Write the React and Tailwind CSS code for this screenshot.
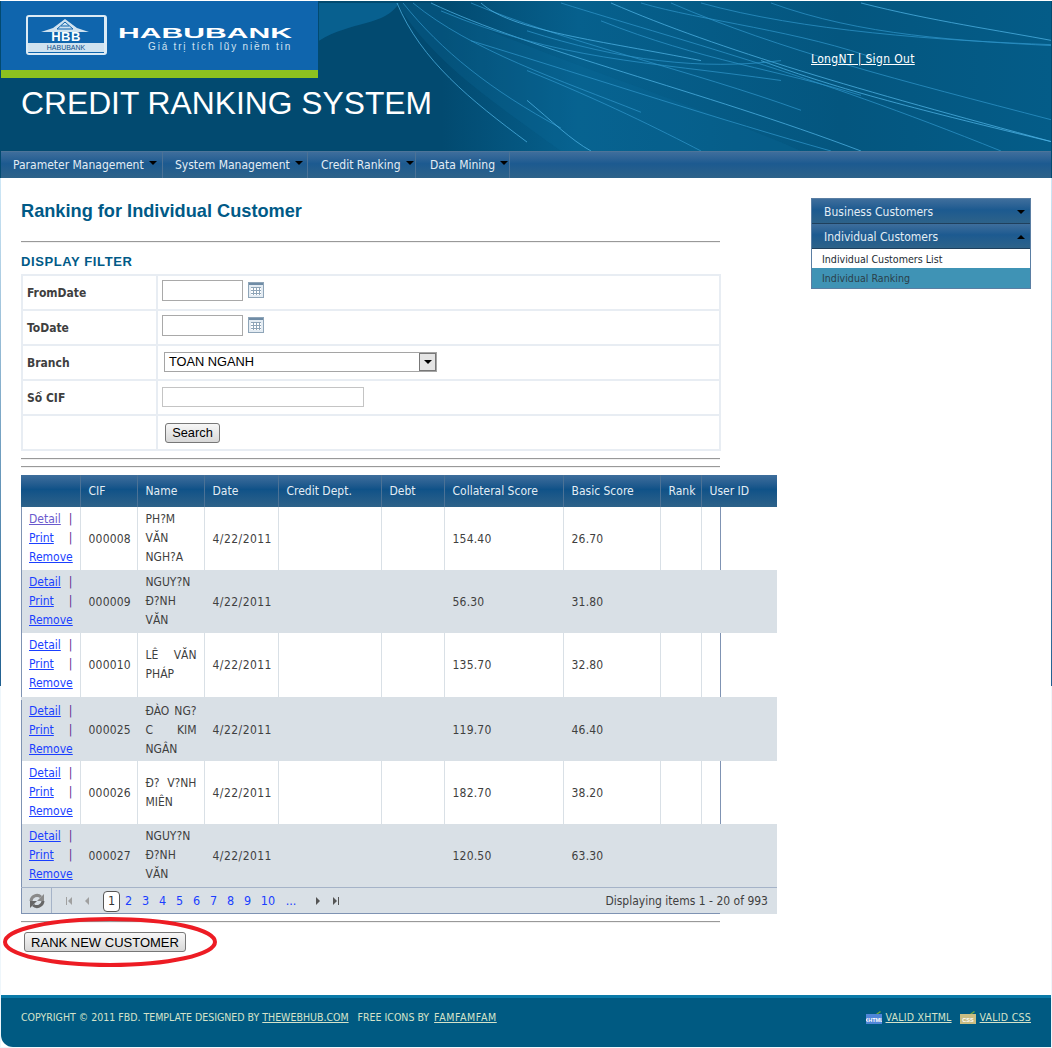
import React from "react"

const navItems = [
  ["Parameter Management", "w-[162px] pl-[12px]"],
  ["System Management", "w-[145px] pl-[12px]"],
  ["Credit Ranking", "w-[108px] pl-[13px]"],
  ["Data Mining", "w-[94px] pl-[14px]"],
]

const rows = [
  { cif: "000008", name: "PH?M VĂN NGH?A", coll: "154.40", basic: "26.70", h: "h-[63px]", visited: true },
  { cif: "000009", name: "NGUY?N Đ?NH VĂN", coll: "56.30", basic: "31.80", h: "h-[63px]", alt: true },
  { cif: "000010", name: "LÊ VĂN PHÁP", coll: "135.70", basic: "32.80", h: "h-[65px] border-b-[3px] border-double border-[#d9e0e6]" },
  { cif: "000025", name: "ĐÀO NG? C KIM NGÂN", coll: "119.70", basic: "46.40", h: "h-[63px]", alt: true },
  { cif: "000026", name: "Đ? V?NH MIÊN", coll: "182.70", basic: "38.20", h: "h-[63px]" },
  { cif: "000027", name: "NGUY?N Đ?NH VĂN", coll: "120.50", basic: "63.30", h: "h-[63px]", alt: true },
]

const headers = ["", "CIF", "Name", "Date", "Credit Dept.", "Debt", "Collateral Score", "Basic Score", "Rank"]
const colWidths = ["w-[59px]", "w-[57px]", "w-[67px]", "w-[74px]", "w-[103px]", "w-[63px]", "w-[119px]", "w-[97px]", "w-[41px]", "w-[19px]", "w-[57px]"]

const pages = [
  ["2", "w-[17px]"], ["3", "w-[17px]"], ["4", "w-[17px]"], ["5", "w-[17px]"], ["6", "w-[17px]"],
  ["7", "w-[17px]"], ["8", "w-[17px]"], ["9", "w-[17px]"], ["10", "w-[24px]"], ["...", "w-[22px]"],
]

function Hr({ className }) {
  return <div className={"h-[2px] w-[699px] border-t border-[#999] bg-[#f1f1f1] " + className} />
}

function Streaks() {
  const lines = [
    "M396 2 C 420 60 470 100 526 142",
    "M402 2 C 440 50 490 90 560 128",
    "M412 2 C 470 50 560 80 640 112",
    "M430 2 C 530 50 700 90 860 151",
    "M470 2 C 560 40 690 70 800 110",
    "M560 2 C 680 40 800 70 1000 151",
    "M610 2 C 720 50 860 90 1052 142",
    "M670 2 C 780 50 900 80 1052 120",
    "M770 2 C 860 35 960 40 1052 45",
    "M860 2 C 930 20 1000 30 1052 40",
    "M470 40 C 600 80 720 120 830 151",
    "M526 70 C 600 100 660 130 700 151",
    "M526 100 C 550 120 570 140 590 151",
    "M600 20 C 700 60 780 70 860 95",
    "M440 10 C 560 60 640 60 780 80",
    "M760 60 C 840 90 920 110 1052 142",
    "M526 30 C 620 60 700 70 780 60",
    "M700 2 C 800 30 940 40 1052 44",
    "M480 2 C 510 30 600 40 700 60",
    "M640 2 C 700 20 800 30 880 60",
  ]
  return (
    <svg className="absolute inset-0 h-full w-full" viewBox="0 0 1050 151" preserveAspectRatio="none">
      <defs>
        <linearGradient id="hdr" x1="0" y1="0" x2="1" y2="0">
          <stop offset="0" stopColor="#024a70" />
          <stop offset="0.42" stopColor="#024a70" />
          <stop offset="0.55" stopColor="#06608d" />
          <stop offset="0.8" stopColor="#04567f" />
          <stop offset="1" stopColor="#045c88" />
        </linearGradient>
      </defs>
      <rect width="1050" height="151" fill="url(#hdr)" />
      <path d="M318 40 C 350 20 385 25 398 2 L 318 2 Z" fill="#0b6a9c" opacity="0.7" />
      <path d="M396 2 C 430 60 490 100 560 151 L 800 151 C 660 90 520 50 430 2 Z" fill="#0a6a9c" opacity="0.25" />
      {lines.map((d, i) => (
        <path key={i} d={d} fill="none" stroke={i % 3 == 0 ? "#4fb4e6" : "#2e93c8"} strokeWidth="1" opacity="0.75" />
      ))}
    </svg>
  )
}

function Logo() {
  return (
    <div className="flex h-[69px] w-[317px] items-start bg-[#0f65ad] pl-[25px] pt-[14px]">
      <div className="relative flex h-[40px] w-[81px] flex-col items-center rounded-[3px] border-2 border-[#dcebf5] border-r-[3px] bg-[#0f65ad]">
        <svg className="absolute left-[11px] top-[2px]" width="52" height="14" viewBox="0 0 52 14">
          <path d="M26 0 L38 9 L50 13 H2 L14 9 Z" fill="#cfe2f0" />
          <path d="M26 3 L18 10M26 3 L34 10M22 7 L30 7M18 10 L34 10" stroke="#0f65ad" strokeWidth="1" fill="none" />
        </svg>
        <span className="mt-[14px] font-['Liberation_Sans',sans-serif] text-[13px] font-bold leading-[11px] tracking-[0.5px] text-white">HBB</span>
        <span className="mt-[1px] w-full bg-[#cfe2f0] text-center font-['Liberation_Sans',sans-serif] text-[7px] leading-[9px] text-[#0f4f88]">HABUBANK</span>
      </div>
      <div className="ml-[11px] flex w-[176px] flex-col items-end">
        <span className="mt-[13px] w-full origin-left scale-x-[2.15] font-['Liberation_Sans',sans-serif] text-[14px] font-bold leading-[11px] text-white">HABUBANK</span>
        <span className="mr-[2px] mt-[3px] font-['Liberation_Sans',sans-serif] text-[10px] leading-[9px] tracking-[1.8px] text-[#cfe2f0]">Giá trị tích lũy niềm tin</span>
      </div>
    </div>
  )
}

function CalendarIcon() {
  return (
    <svg className="ml-[5px] mt-[-6px]" width="16" height="16" viewBox="0 0 16 16" shapeRendering="crispEdges">
      <rect x="0.5" y="0.5" width="15" height="15" fill="#e4ecf3" stroke="#8fa5b8" />
      <rect x="1" y="1" width="14" height="2" fill="#6f8ca6" />
      <path d="M3 5h10v8H3z" fill="#fff" />
      <path d="M3 5.5h10M3 8.5h10M3 11.5h10M5.5 5v8M8.5 5v8M11.5 5v8" stroke="#8fa5b8" fill="none" />
    </svg>
  )
}

function FilterRow({ label, children }) {
  return (
    <tr className="h-[35px]">
      <td className="w-[135px] border-2 border-[#e8edf3] pl-[4px] font-bold text-[#3f3f3f]">{label}</td>
      <td className="border-2 border-[#e8edf3] pl-[4px]">
        <div className="flex items-center">{children}</div>
      </td>
    </tr>
  )
}

function PagerArrow({ d, fill }) {
  return (
    <svg width="8" height="10" viewBox="0 0 8 10">
      <path d={d} fill={fill} />
    </svg>
  )
}

function BadgeIcon({ label, fill, className }) {
  return (
    <svg className={className} width="16" height="13" viewBox="0 0 16 13">
      <rect x="0" y="3" width="16" height="10" fill={fill} />
      <path d="M10 3l4-3 1 1-3 2z" fill="#6fa83c" />
      <text x="8" y="11" textAnchor="middle" fontSize="5.5" fontWeight="bold" fill="#fff" fontFamily="Liberation Sans">{label}</text>
    </svg>
  )
}

function App() {
  return (
    <div className="h-[1048px] w-[1052px] overflow-hidden bg-[linear-gradient(to_bottom,#fff_1px,#024a70_1px,#024a70_178px,#cfe8f7_178px,#1f5f90_686px,#eef6fb_686px)] px-px font-['DejaVu_Sans_Condensed','DejaVu_Sans',sans-serif] text-[12px] text-[#3f3f3f]">
      <div className="flex h-[1047px] flex-col bg-white pt-px">
        <header className="relative h-[150px] w-[1050px] shrink-0">
          <Streaks />
          <div className="relative">
            <Logo />
            <div className="h-[8px] w-[317px] bg-[#8dc21f]" />
            <h1 className="ml-[20px] mt-[6px] font-['Liberation_Sans',sans-serif] text-[31.8px] leading-[38px] text-white">CREDIT RANKING SYSTEM</h1>
          </div>
          <a className="absolute left-[810px] top-[49px] tracking-[0.35px] text-white underline">LongNT | Sign Out</a>
        </header>

        <nav className="flex h-[27px] w-[1050px] shrink-0 border-t border-[#4d7499] bg-gradient-to-b from-[#3e6e9c] via-[#1c5a90] via-45% to-[#2d6289] text-[#e4edf4]">
          {navItems.map(([label, w]) => (
            <div key={label} className={"flex items-center border-r border-[#4b7296] " + w}>
              <span>{label}</span>
              <span className="ml-[5px] mt-[-5px] h-0 w-0 border-x-[4px] border-t-[4px] border-x-transparent border-t-black" />
            </div>
          ))}
        </nav>

        <div className="flex">
          <main className="ml-[20px] w-[756px]">
            <h2 className="mt-[22px] font-['Liberation_Sans',sans-serif] text-[18.2px] font-bold leading-[22px] text-[#005a87]">Ranking for Individual Customer</h2>
            <Hr className="mt-[19px]" />
            <h3 className="mt-[11px] font-['Liberation_Sans',sans-serif] text-[13px] font-bold leading-[15px] tracking-[0.6px] text-[#005a87]">DISPLAY FILTER</h3>

            <table className="mt-[5px] w-[700px] border-collapse">
              <tbody>
                <FilterRow label="FromDate">
                  <input className="mb-[4px] h-[21px] w-[81px] border border-[#a9a9a9]" />
                  <CalendarIcon />
                </FilterRow>
                <FilterRow label="ToDate">
                  <input className="mb-[4px] h-[21px] w-[81px] border border-[#a9a9a9]" />
                  <CalendarIcon />
                </FilterRow>
                <FilterRow label="Branch">
                  <div className="mb-[2px] ml-[2px] flex h-[20px] w-[273px] items-center justify-between border border-[#a5a5a5] pl-[4px] pt-px font-['Liberation_Sans',sans-serif] text-[12.8px] text-black">
                    TOAN NGANH
                    <span className="mt-[-1px] flex h-[18px] w-[17px] items-center justify-center border border-[#777] bg-[#e4e4e4]">
                      <span className="h-0 w-0 border-x-[4px] border-t-[4px] border-x-transparent border-t-black" />
                    </span>
                  </div>
                </FilterRow>
                <FilterRow label="Số CIF">
                  <input className="mb-[2px] h-[20px] w-[202px] border border-[#c4c4c4]" />
                </FilterRow>
                <FilterRow label="">
                  <button className="ml-[3px] h-[20px] w-[55px] rounded-[3px] border border-[#777] bg-gradient-to-b from-[#f7f7f7] to-[#d8d8d8] pt-[2px] font-['Liberation_Sans',sans-serif] text-[12.8px] leading-none text-black">Search</button>
                </FilterRow>
              </tbody>
            </table>

            <Hr className="mt-[7px]" />
            <Hr className="mt-[6px]" />

            <table className="mt-[7px] w-[756px] table-fixed border-collapse">
              <colgroup>
                {colWidths.map((w, i) => <col key={i} className={w} />)}
              </colgroup>
              <thead>
                <tr className="h-[32px] bg-gradient-to-b from-[#3e6e9c] via-[#0f5288] via-45% to-[#2d6289] text-[#e4edf4]">
                  {headers.map((label) => (
                    <th key={label} className="border-r border-[#4b7296] pl-[8px] text-left font-normal">{label}</th>
                  ))}
                  <th colSpan={2} className="pl-[8px] text-left font-normal">User ID</th>
                </tr>
              </thead>
              <tbody>
                {rows.map((r) => {
                  const cell = "border-r border-[#d9e0e6] pl-[8px] pr-[7px] "
                  return (
                    <tr key={r.cif} className={r.h + (r.alt ? " bg-[#d9e0e6]" : "")}>
                      <td className={cell + "text-justify leading-[19px] shadow-[inset_1px_0_0_#7f93b3]"}>
                        <a className={(r.visited ? "text-[#6a5acd]" : "text-[#1a3fff]") + " underline"}>Detail</a> <span className="text-[#5a2a90]">|</span> <a className="text-[#1a3fff] underline">Print</a> <span className="text-[#5a2a90]">|</span> <a className="text-[#1a3fff] underline">Remove</a>
                      </td>
                      <td className={cell + "tracking-[0.2px]"}>{r.cif}</td>
                      <td className={cell + "text-justify leading-[19px]"}>{r.name}</td>
                      <td className={cell + "tracking-[0.45px]"}>4/22/2011</td>
                      <td className={cell} />
                      <td className={cell} />
                      <td className={cell + "tracking-[0.2px]"}>{r.coll}</td>
                      <td className={cell + "tracking-[0.2px]"}>{r.basic}</td>
                      <td className={cell} />
                      <td className={r.alt ? "" : "border-r border-[#7f93b3]"} />
                      <td />
                    </tr>
                  )
                })}
              </tbody>
            </table>

            <div className="relative flex h-[27px] w-[756px] items-center border-t border-[#a5b3c8] bg-[#d9e0e6]">
              <div className="flex h-full w-[31px] items-center justify-center border-x border-l-[#7f93b3] border-r-[#a5b3c8]">
                <svg width="18" height="18" viewBox="0 0 18 18" fill="none">
                  <path d="M3 9 A6 6 0 0 1 13 5" stroke="#8a8a8a" strokeWidth="3" />
                  <path d="M16 2 V9 H9 Z" fill="#8a8a8a" />
                  <path d="M15 9 A6 6 0 0 1 5 13" stroke="#666" strokeWidth="3" />
                  <path d="M2 16 V9 H9 Z" fill="#666" />
                </svg>
              </div>
              <div className="ml-[13px] flex items-center gap-[10px]">
                <PagerArrow d="M1 1h1v8H1zM7 1v8L3 5z" fill="#a0a0a0" />
                <PagerArrow d="M6 1v8L2 5z" fill="#a0a0a0" />
              </div>
              <div className="ml-[12px] flex items-center text-[12.5px] text-[#1a3fff]">
                <span className="flex h-[21px] w-[17px] items-center justify-center rounded-[4px] border border-[#555] bg-white text-[#333]">1</span>
                {pages.map(([p, w]) => (
                  <span key={p} className={"text-center " + w}>{p}</span>
                ))}
              </div>
              <div className="ml-[12px] flex items-center gap-[10px]">
                <PagerArrow d="M2 1v8l4-4z" fill="#555" />
                <PagerArrow d="M1 1v8l4-4zM6 1h1v8H6z" fill="#555" />
              </div>
              <span className="ml-auto pr-[9px]">Displaying items 1 - 20 of 993</span>
              <div className="absolute bottom-0 left-0 h-px w-[699px] bg-[#7f93b3]" />
            </div>

            <Hr className="mt-[7px]" />

            <div className="relative mt-[9px] h-[20px]">
              <button className="relative ml-[3px] h-[20px] w-[162px] rounded-[3px] border border-[#777] bg-gradient-to-b from-[#f7f7f7] to-[#d8d8d8] font-['Liberation_Sans',sans-serif] text-[13px] leading-none text-black">RANK NEW CUSTOMER</button>
              <svg className="absolute left-[-18px] top-[-16px]" width="220" height="52" viewBox="0 0 220 52" fill="none">
                <ellipse cx="107" cy="26" rx="105" ry="23" stroke="#ed1c24" strokeWidth="4" />
              </svg>
            </div>
          </main>

          <aside className="ml-[34px] mt-[20px] h-[91px] w-[220px] border border-[#5a7ea3] bg-[#3f93b5]">
            <div className="flex h-[25px] items-center justify-between border-b border-[#1f3f5c] bg-gradient-to-b from-[#3e6e9c] via-[#1c5a90] via-45% to-[#2d6289] pl-[12px] pr-[5px] pt-[2px] text-[#e4edf4]">
              Business Customers
              <span className="h-0 w-0 border-x-[4px] border-t-[4px] border-x-transparent border-t-black" />
            </div>
            <div className="flex h-[25px] items-center justify-between border-b border-[#1f3f5c] bg-gradient-to-b from-[#3e6e9c] via-[#1c5a90] via-45% to-[#2d6289] pl-[12px] pr-[5px] pt-[2px] text-[#e4edf4]">
              Individual Customers
              <span className="h-0 w-0 border-x-[4px] border-b-[4px] border-x-transparent border-b-black" />
            </div>
            <div className="flex h-[19px] items-center bg-white pl-[10px] pt-[3px] text-[10.6px] text-[#1b2a33]">Individual Customers List</div>
            <div className="flex h-[20px] items-center pl-[10px] pt-[1px] text-[10.6px] text-[#2b3f4a]">Individual Ranking</div>
          </aside>
        </div>

        <footer className="mt-auto flex h-[52px] w-[1050px] shrink-0 items-start justify-between rounded-bl-[12px] border-t-[3px] border-[#0a7aa8] bg-[#005a82] px-[20px] pt-[12px] text-[10.5px] leading-[14px] text-[#d5e3c9]">
          <div>
            COPYRIGHT © 2011 FBD. TEMPLATE DESIGNED BY <a className="underline">THEWEBHUB.COM</a>
            <span className="ml-[9px]">FREE ICONS BY </span><a className="ml-[2px] tracking-[0.6px] underline">FAMFAMFAM</a>
          </div>
          <div className="flex items-center">
            <BadgeIcon label="XHTML" fill="#4f86d8" />
            <a className="ml-[4px] tracking-[0.25px] underline">VALID XHTML</a>
            <BadgeIcon label="CSS" fill="#c9bd83" className="ml-[8px]" />
            <a className="ml-[4px] tracking-[0.25px] underline">VALID CSS</a>
          </div>
        </footer>
      </div>
    </div>
  )
}

export default App
